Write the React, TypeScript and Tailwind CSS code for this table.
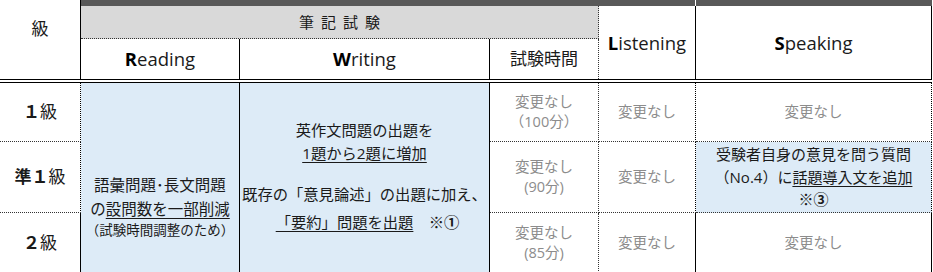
const font = { fontFamily: '"Open Sans", "Noto Sans CJK JP", sans-serif' };

function Head({ first, rest }: { first: string; rest: string }) {
  return (
    <span className="text-[18.5px] text-[#1a1a1a]">
      <b className="font-bold text-black">{first}</b>
      {rest}
    </span>
  );
}

function Grade({ bold, label }: { bold: string; label: string }) {
  return (
    <span className="text-[17px] text-[#1a1a1a]">
      <b className="font-bold">{bold}</b>
      {label}
    </span>
  );
}

function Same({ sub }: { sub?: string }) {
  return (
    <div className="flex flex-col items-center text-[14.5px] leading-[20px] text-[#8c8c8c]">
      <span>変更なし</span>
      {sub && <span>{sub}</span>}
    </div>
  );
}

export default function App() {
  const cell = "flex items-center justify-center text-center";
  return (
    <div className="w-[933px] h-[272px] overflow-hidden bg-white" style={font}>
      <div className="grid grid-cols-[81px_159px_250px_109px_97px_236px] grid-rows-[6px_33px_40px_4px_59px_71px_60px]">
        {/* header */}
        <div className="col-start-1 row-start-1 row-span-3 border-r border-black flex justify-center pt-[16px]">
          <span className="text-[17px] text-[#1a1a1a]">級</span>
        </div>
        <div className="col-start-2 col-end-6 row-start-1 bg-[#595959] border-r border-white" />
        <div className="col-start-6 row-start-1 bg-[#595959]" />
        <div className={`${cell} col-start-2 col-end-5 row-start-2 bg-[#d9d9d9] border-b border-r border-dotted border-[#333]`}>
          <span className="text-[15px] tracking-[7px] pl-[7px] text-[#1a1a1a]">筆記試験</span>
        </div>
        <div className={`${cell} col-start-5 row-start-2 row-span-2 border-r border-black`}>
          <Head first="L" rest="istening" />
        </div>
        <div className={`${cell} col-start-6 row-start-2 row-span-2 border-r border-black`}>
          <Head first="S" rest="peaking" />
        </div>
        <div className={`${cell} col-start-2 row-start-3 border-r border-black`}>
          <Head first="R" rest="eading" />
        </div>
        <div className={`${cell} col-start-3 row-start-3 border-r border-black`}>
          <Head first="W" rest="riting" />
        </div>
        <div className={`${cell} col-start-4 row-start-3 border-r border-dotted border-[#333]`}>
          <span className="text-[17px] text-[#1a1a1a]">試験時間</span>
        </div>
        <div className="col-start-1 col-end-7 row-start-4 border-y border-black" />

        {/* grade labels */}
        <div className={`${cell} col-start-1 row-start-5 border-r border-r-black border-b border-dotted border-b-[#333]`}>
          <Grade bold="１" label="級" />
        </div>
        <div className={`${cell} col-start-1 row-start-6 border-r border-r-black border-b border-dotted border-b-[#333]`}>
          <Grade bold="準１" label="級" />
        </div>
        <div className={`${cell} col-start-1 row-start-7 border-r border-black`}>
          <Grade bold="２" label="級" />
        </div>

        {/* reading */}
        <div className={`${cell} col-start-2 row-start-5 row-span-3 bg-[#ddebf7] border-r border-black`}>
          <div className="flex flex-col items-center text-[#1a1a1a] mt-[56px]">
            <span className="text-[15.5px] leading-[24px]">語彙問題･長文問題</span>
            <span className="text-[15.5px] leading-[24px]">
              の<span className="underline underline-offset-[3px]">設問数を一部削減</span>
            </span>
            <span className="text-[13.5px] leading-[19px]">（試験時間調整のため）</span>
          </div>
        </div>

        {/* writing */}
        <div className={`${cell} col-start-3 row-start-5 row-span-3 bg-[#ddebf7] border-r border-black`}>
          <div className="flex flex-col items-center text-[15.3px] leading-[23px] text-[#1a1a1a] -mt-[4px]">
            <span>英作文問題の出題を</span>
            <span className="underline underline-offset-[3px]">1題から2題に増加</span>
            <span className="mt-[18px]">既存の「意見論述」の出題に加え、</span>
            <span className="mt-[5px] pl-[6px]">
              <span className="underline underline-offset-[3px]">「要約」問題を出題</span>
              <span>　※</span>
              <b className="font-bold">①</b>
            </span>
          </div>
        </div>

        {/* time */}
        <div className={`${cell} col-start-4 row-start-5 border-r border-b border-dotted border-[#333]`}>
          <Same sub="（100分）" />
        </div>
        <div className={`${cell} col-start-4 row-start-6 border-r border-b border-dotted border-[#333]`}>
          <Same sub="(90分)" />
        </div>
        <div className={`${cell} col-start-4 row-start-7 border-r border-dotted border-[#333]`}>
          <Same sub="(85分)" />
        </div>

        {/* listening */}
        <div className={`${cell} col-start-5 row-start-5 border-r border-r-black border-b border-dotted border-b-[#333]`}>
          <Same />
        </div>
        <div className={`${cell} col-start-5 row-start-6 border-r border-r-black border-b border-dotted border-b-[#333]`}>
          <Same />
        </div>
        <div className={`${cell} col-start-5 row-start-7 border-r border-black`}>
          <Same />
        </div>

        {/* speaking */}
        <div className={`${cell} col-start-6 row-start-5 border-r border-r-black border-b border-dotted border-b-[#333]`}>
          <Same />
        </div>
        <div className={`${cell} col-start-6 row-start-6 bg-[#ddebf7] border-r border-r-black border-b border-dotted border-b-[#333]`}>
          <div className="flex flex-col items-center text-[15px] leading-[22.5px] text-[#1a1a1a]">
            <span>受験者自身の意見を問う質問</span>
            <span>
              （No.4）に<span className="underline underline-offset-[3px]">話題導入文を追加</span>
            </span>
            <span>
              ※<b className="font-bold">③</b>
            </span>
          </div>
        </div>
        <div className={`${cell} col-start-6 row-start-7 border-r border-black`}>
          <Same />
        </div>
      </div>
    </div>
  );
}
